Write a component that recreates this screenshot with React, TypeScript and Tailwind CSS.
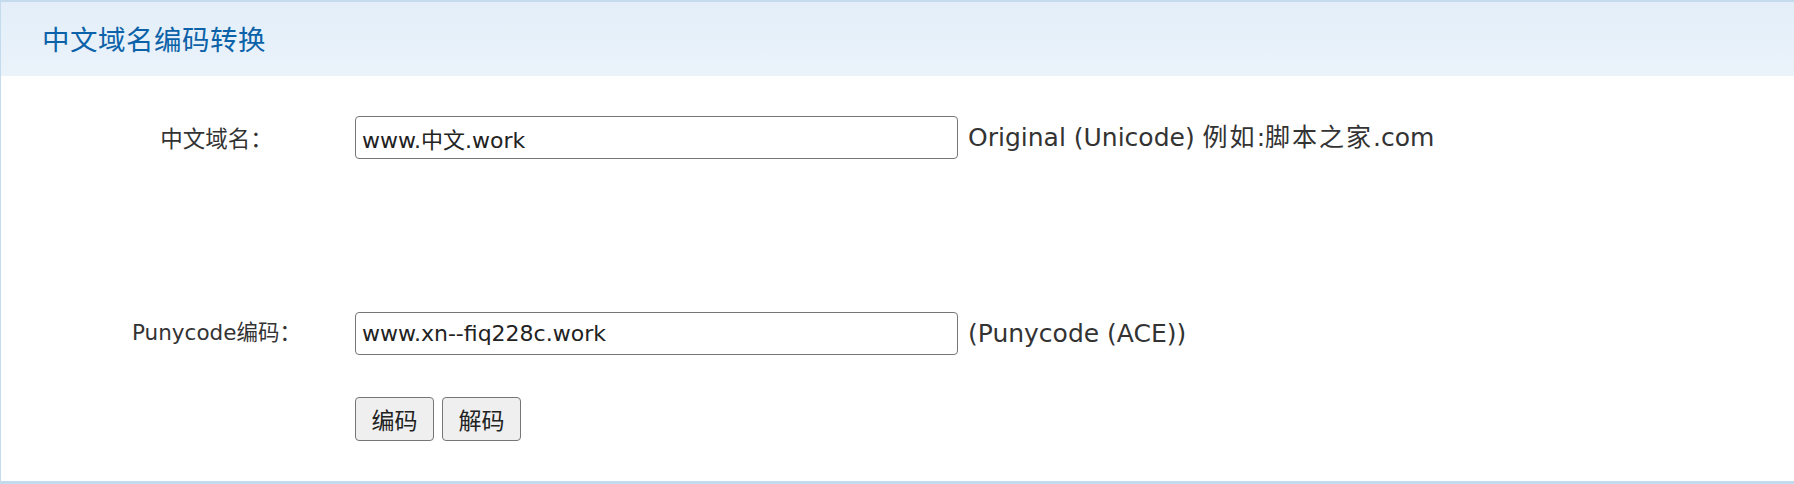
export default function App() {
  return (
    <div className="w-[1794px] h-[484px] bg-white font-['Tahoma','DejaVu_Sans','Noto_Sans_CJK_SC',sans-serif] text-[#333]">
      <div className="h-[484px] flex flex-col border-t-2 border-b-[3px] border-l border-[#c4dbee]">
        {/* header */}
        <div className="h-[74px] flex items-center pl-[41px] bg-gradient-to-b from-[#e3eef9] to-[#ebf3fa]">
          <h2 className="text-[27.5px] text-[#0b62a8] font-['Noto_Sans_CJK_SC',sans-serif] tracking-[0.5px]">中文域名编码转换</h2>
        </div>

        <div className="flex flex-col pt-[40px]">
          <div className="flex items-center h-[43px]">
            <div className="ml-[77px] w-[277px] text-center text-[22.5px] font-['Noto_Sans_CJK_SC',sans-serif]">中文域名：</div>
            <input
              readOnly
              value="www.中文.work"
              className="w-[603px] h-[43px] border-[1.5px] border-[#767676] rounded-[4px] px-[6px] text-[22px] text-[#222] outline-none"
            />
            <span className="ml-[10px] text-[25px]">
              Original (Unicode) <span className="tracking-[2px]">例如</span>:<span className="tracking-[2px]">脚本之家</span>.com
            </span>
          </div>

          <div className="flex items-center h-[43px] mt-[153px]">
            <div className="ml-[77px] w-[277px] text-center text-[21.5px]">Punycode编码：</div>
            <input
              readOnly
              value="www.xn--fiq228c.work"
              className="w-[603px] h-[43px] border-[1.5px] border-[#767676] rounded-[4px] px-[6px] text-[22px] text-[#222] outline-none"
            />
            <span className="ml-[10px] text-[25px]">(Punycode (ACE))</span>
          </div>

          <div className="flex gap-[8px] pl-[354px] mt-[42px]">
            <button className="w-[79px] h-[44px] border-[1.5px] border-[#767676] rounded-[4px] bg-[#efefef] text-[23px] text-[#222] font-['Noto_Sans_CJK_SC',sans-serif]">编码</button>
            <button className="w-[79px] h-[44px] border-[1.5px] border-[#767676] rounded-[4px] bg-[#efefef] text-[23px] text-[#222] font-['Noto_Sans_CJK_SC',sans-serif]">解码</button>
          </div>
        </div>
      </div>
    </div>
  );
}
